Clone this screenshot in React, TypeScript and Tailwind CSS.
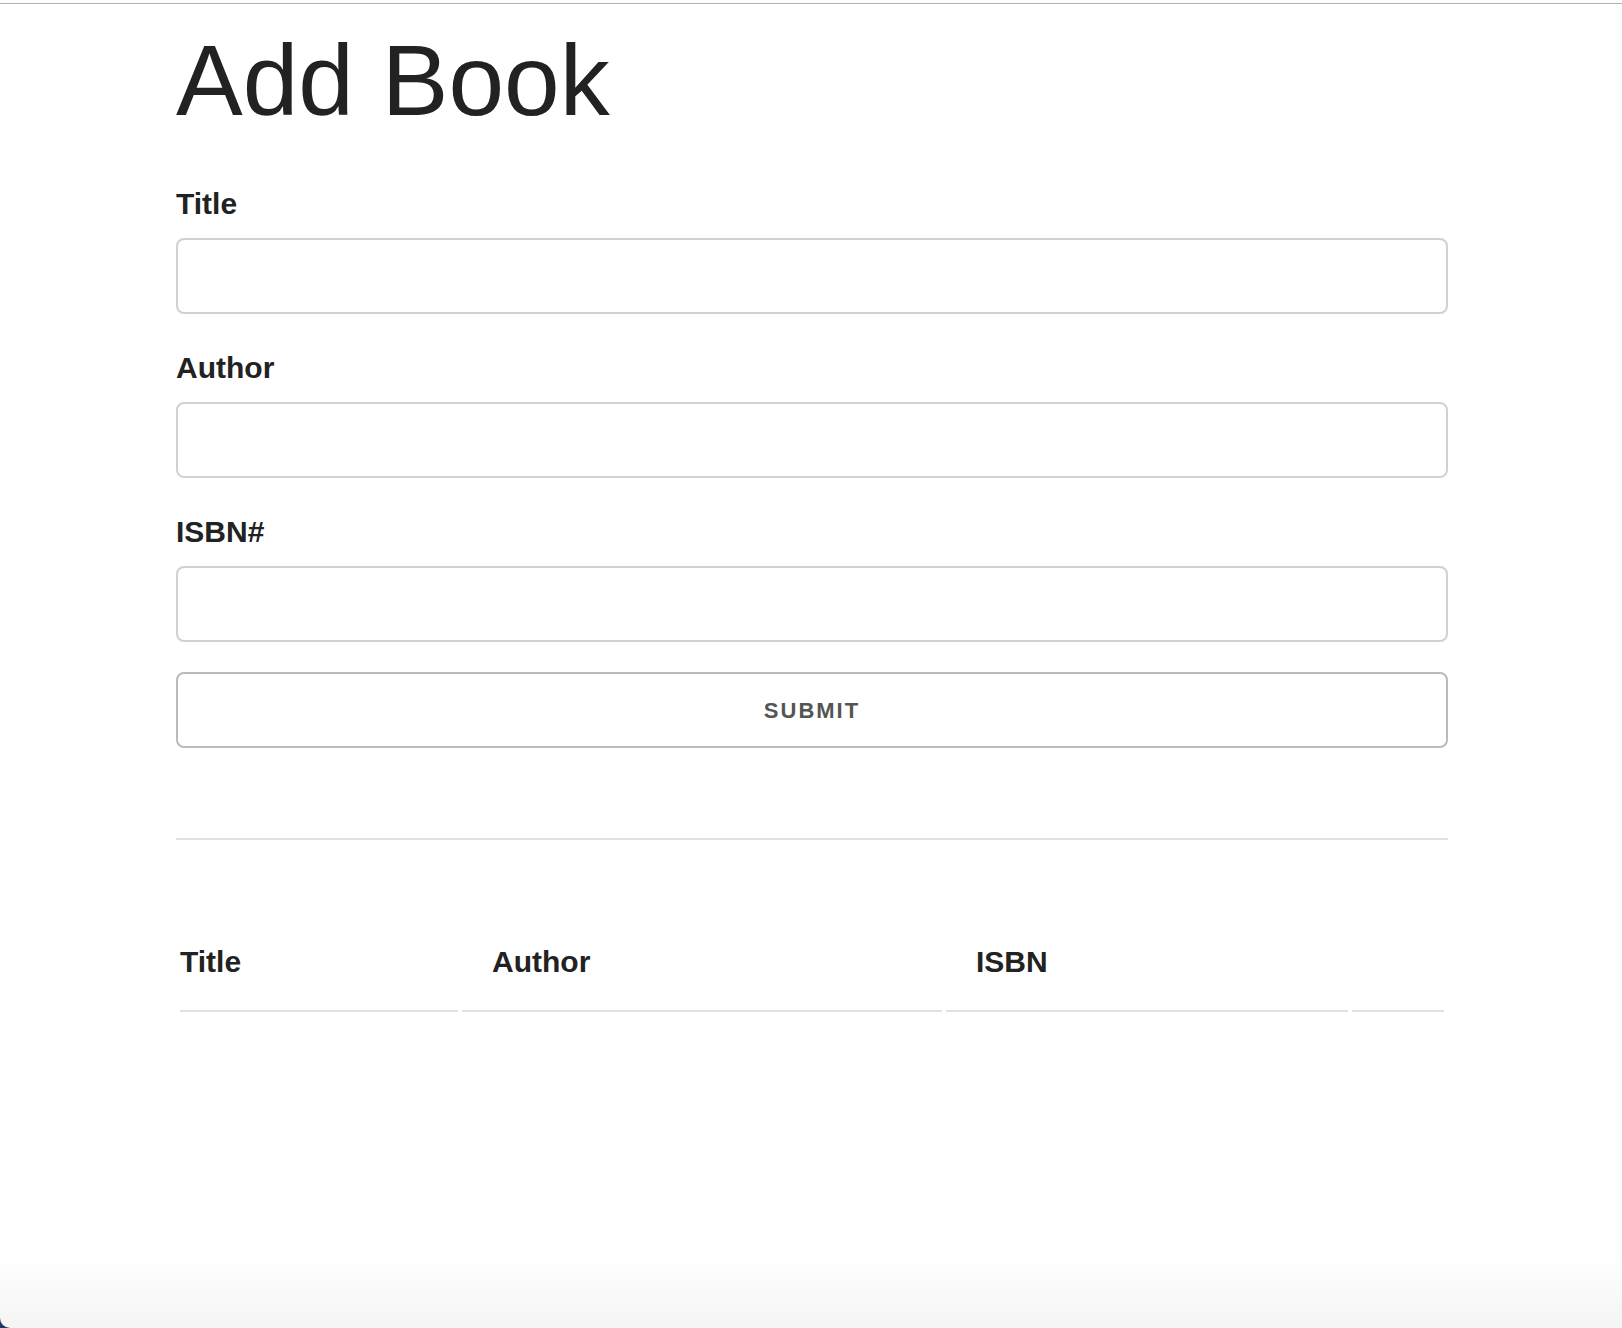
import React, { useState } from 'react';

type Book = { title: string; author: string; isbn: string };

const fields: { key: keyof Book; label: string }[] = [
  { key: 'title', label: 'Title' },
  { key: 'author', label: 'Author' },
  { key: 'isbn', label: 'ISBN#' },
];

const App: React.FC = () => {
  const [form, setForm] = useState<Book>({ title: '', author: '', isbn: '' });
  const [books, setBooks] = useState<Book[]>([]);

  const handleSubmit = (e: React.FormEvent) => {
    e.preventDefault();
    if (!form.title) return;
    setBooks([...books, form]);
    setForm({ title: '', author: '', isbn: '' });
  };

  return (
    <div className="h-[1328px] w-full bg-[#1d3a5c]">
      <div
        className="h-full overflow-hidden rounded-bl-[10px] bg-[linear-gradient(to_bottom,#ffffff_0px,#ffffff_1260px,#f4f4f4_1328px)] text-[#222] font-['Liberation_Sans',Arial,sans-serif]"
      >
        <div className="pt-[3px]">
          <div className="h-px bg-[#b4b4b4]" />
        </div>

        <div className="ml-[176px] w-[1272px]">
          <h1 className="mt-[16px] mb-[40px] text-[100px] leading-[120px] font-normal">Add Book</h1>

          <form onSubmit={handleSubmit}>
            {fields.map((f) => (
              <div key={f.key}>
                <label className="mb-[10px] block text-[30px] leading-[48px] font-bold">{f.label}</label>
                <input
                  type="text"
                  value={form[f.key]}
                  onChange={(e) => setForm({ ...form, [f.key]: e.target.value })}
                  className="mb-[30px] block h-[76px] w-full rounded-[8px] border-2 border-[#d1d1d1] bg-white px-[20px] text-[30px] outline-none"
                />
              </div>
            ))}
            <button
              type="submit"
              className="block h-[76px] w-full rounded-[8px] border-2 border-[#bbb] bg-transparent text-[22px] font-bold uppercase tracking-[2px] text-[#555]"
            >
              Submit
            </button>
          </form>

          <hr className="mt-[90px] mb-[70px] border-0 border-t-2 border-[#e1e1e1]" />

          <table className="w-full table-fixed border-separate border-spacing-[4px]">
            <thead>
              <tr className="text-left text-[30px] leading-[48px] font-bold">
                <th className="w-[278px] border-b-2 border-[#e1e1e1] py-[24px] pr-[30px] pl-0">Title</th>
                <th className="w-[480px] border-b-2 border-[#e1e1e1] px-[30px] py-[24px]">Author</th>
                <th className="w-[402px] border-b-2 border-[#e1e1e1] px-[30px] py-[24px]">ISBN</th>
                <th className="border-b-2 border-[#e1e1e1] py-[24px] pl-[30px] pr-0"></th>
              </tr>
            </thead>
            <tbody>
              {books.map((b, i) => (
                <tr key={i} className="text-[30px] leading-[48px]">
                  <td className="border-b-2 border-[#e1e1e1] py-[24px] pr-[30px]">{b.title}</td>
                  <td className="border-b-2 border-[#e1e1e1] px-[30px] py-[24px]">{b.author}</td>
                  <td className="border-b-2 border-[#e1e1e1] px-[30px] py-[24px]">{b.isbn}</td>
                  <td className="border-b-2 border-[#e1e1e1] py-[24px] pl-[30px]"></td>
                </tr>
              ))}
            </tbody>
          </table>
        </div>
      </div>
    </div>
  );
};

export default App;
